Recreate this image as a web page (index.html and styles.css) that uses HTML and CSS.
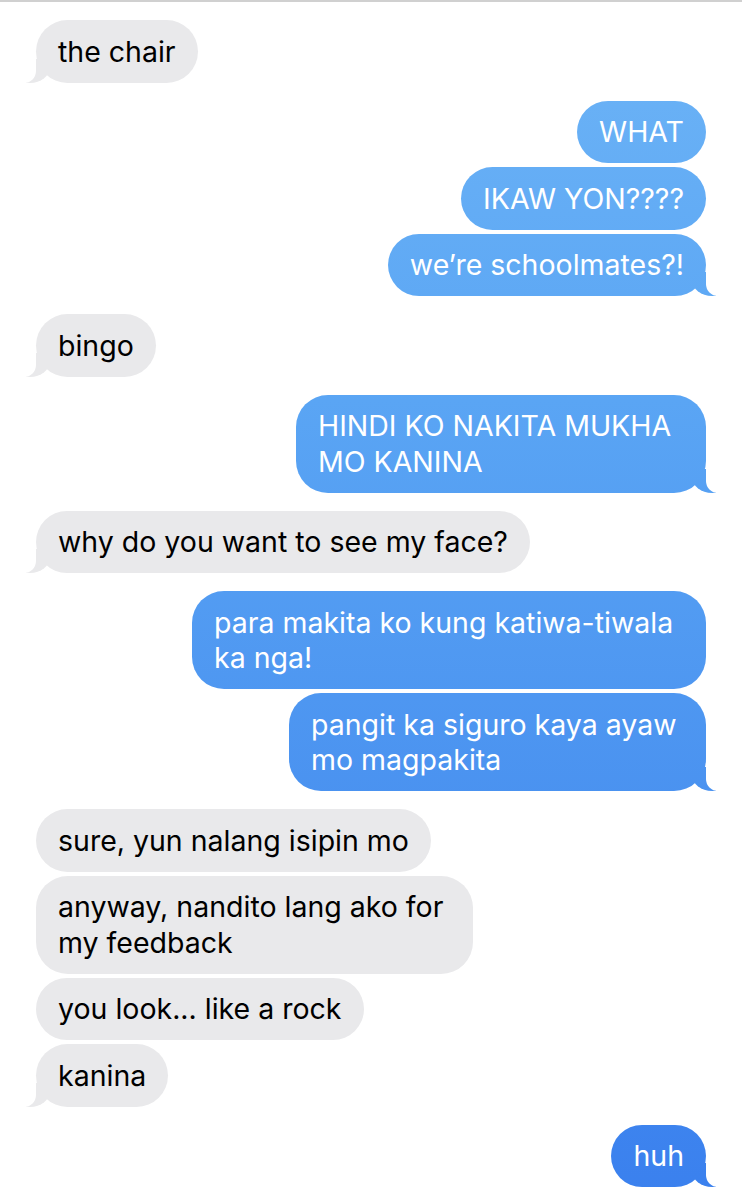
FILE: index.html
```html
<!DOCTYPE html>
<html lang="tl">
<head>
    <meta charset="UTF-8">
    <meta name="viewport" content="width=device-width, initial-scale=1.0">
    <title>Messages</title>
    <link rel="stylesheet" href="styles.css">
</head>
<body>
    <div class="topline"></div>
    <div class="chat">
        <div class="group">
            <div class="msg got tail">the chair</div>
        </div>
        <div class="group">
            <div class="msg sent">WHAT</div>
            <div class="msg sent">IKAW YON????</div>
            <div class="msg sent tail">we’re schoolmates?!</div>
        </div>
        <div class="group">
            <div class="msg got tail">bingo</div>
        </div>
        <div class="group">
            <div class="msg sent tail wide-hindi">HINDI KO NAKITA MUKHA MO KANINA</div>
        </div>
        <div class="group">
            <div class="msg got tail">why do you want to see my face?</div>
        </div>
        <div class="group">
            <div class="msg sent wide-para">para makita ko kung katiwa-tiwala ka nga!</div>
            <div class="msg sent tail wide-pangit">pangit ka siguro kaya ayaw mo magpakita</div>
        </div>
        <div class="group">
            <div class="msg got">sure, yun nalang isipin mo</div>
            <div class="msg got wide-anyway">anyway, nandito lang ako for my feedback</div>
            <div class="msg got">you look... like a rock</div>
            <div class="msg got tail">kanina</div>
        </div>
        <div class="group">
            <div class="msg sent tail">huh</div>
        </div>
    </div>
</body>
</html>
```

FILE: styles.css
```css
body {
    margin: 0;
    padding: 0;
    background: #fff;
    font-family: Inter, "Noto Sans", sans-serif;
    overflow: hidden;
}
.topline {
    height: 2px;
    background: #d0d0d0;
}
.chat {
    display: flex;
    flex-direction: column;
    gap: 18px;
    padding: 18px 36px 0 36px;
}
.group {
    display: flex;
    flex-direction: column;
    gap: 4px;
}
.msg {
    position: relative;
    max-width: 600px;
    padding: 13.5px 22px;
    font-size: 28.5px;
    line-height: 35.5px;
    border-radius: 32px;
}
.got {
    align-self: flex-start;
    background: #e9e9eb;
    color: #000;
}
.sent {
    align-self: flex-end;
    color: #fff;
    background: linear-gradient(to bottom, #6db4f6 0px, #5aa5f4 400px, #4a92f0 800px, #3a80ee 1200px) fixed;
}
.wide-hindi { max-width: 366px; }
.wide-para { max-width: 470px; }
.wide-pangit { max-width: 373px; }
.wide-anyway { max-width: 393px; }

/* tails */
.tail::before,
.tail::after {
    content: "";
    position: absolute;
    bottom: 0;
    height: 24px;
}
.sent.tail::before {
    right: -10px;
    width: 24px;
    background: inherit;
    border-bottom-left-radius: 20px 16px;
}
.sent.tail::after {
    right: -26px;
    width: 26px;
    background: #fff;
    border-bottom-left-radius: 12px;
}
.got.tail::before {
    left: -10px;
    width: 24px;
    background: #e9e9eb;
    border-bottom-right-radius: 20px 16px;
}
.got.tail::after {
    left: -26px;
    width: 26px;
    background: #fff;
    border-bottom-right-radius: 12px;
}
```
